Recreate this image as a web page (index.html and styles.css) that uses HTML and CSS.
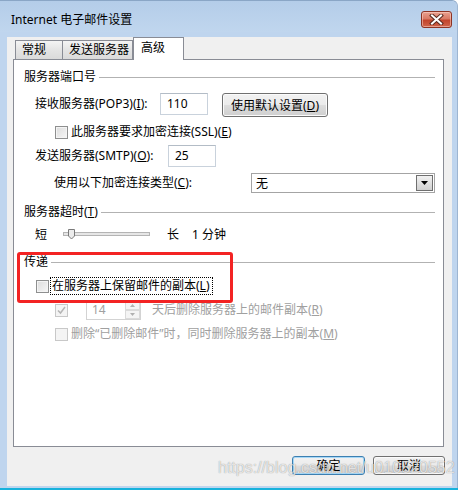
FILE: index.html
```html
<!DOCTYPE html>
<html lang="zh-CN">
<head>
  <meta charset="UTF-8">
  <title>Internet 电子邮件设置</title>
  <link rel="stylesheet" href="styles.css">
</head>
<body>

  <div class="window">
    <!-- Title bar -->
    <div class="titlebar">
      <span class="title">Internet 电子邮件设置</span>
      <button class="close-btn">
        <svg width="15" height="11" viewBox="0 0 15 11">
          <path d="M3 1.5 L12 9.5 M12 1.5 L3 9.5" stroke="#5a2a1f" stroke-width="4" stroke-linecap="square"/>
          <path d="M3 1.5 L12 9.5 M12 1.5 L3 9.5" stroke="#fff" stroke-width="2" stroke-linecap="square"/>
        </svg>
      </button>
    </div>

    <div class="client">
      <div class="tabs">
        <div class="tab tab-general">常规</div>
        <div class="tab tab-send">发送服务器</div>
        <div class="tab active">高级</div>
      </div>

      <div class="panel">
        <div class="group-title"><span>服务器端口号</span><i class="rule"></i></div>

        <div class="row row-pop">
          <span class="lbl lbl-pop">接收服务器(POP3)(<u>I</u>):</span>
          <div class="textbox">110</div>
          <button class="btn btn-default-set">使用默认设置(<u>D</u>)</button>
        </div>

        <div class="row row-ssl">
          <span class="check"></span>
          <span class="check-text">此服务器要求加密连接(SSL)(<u>E</u>)</span>
        </div>

        <div class="row row-smtp">
          <span class="lbl lbl-smtp">发送服务器(SMTP)(<u>O</u>):</span>
          <div class="textbox">25</div>
        </div>

        <div class="row row-enc">
          <span class="lbl lbl-enc">使用以下加密连接类型(<u>C</u>):</span>
          <div class="select">
            <span class="select-value">无</span>
            <span class="select-btn">
              <svg width="7" height="4" viewBox="0 0 7 4"><path d="M0 0 H7 L3.5 4 Z" fill="#000"/></svg>
            </span>
          </div>
        </div>

        <div class="group-title gt-timeout"><span>服务器超时(<u>T</u>)</span><i class="rule"></i></div>

        <div class="row row-slider">
          <span class="short">短</span>
          <svg class="slider" width="87" height="16" viewBox="0 0 87 16">
            <rect x="0.5" y="5.5" width="86" height="3" fill="#e6e6e6" stroke="#b4b4b4"/>
            <path d="M5.5 2.5 H11.5 V9 L8.5 12 L5.5 9 Z" fill="#ececec" stroke="#7a7a7a"/>
          </svg>
          <span class="long">长</span>
          <span class="minutes">1 分钟</span>
        </div>

        <div class="group-title gt-deliver"><span>传递</span><i class="rule"></i></div>

        <div class="row row-keep">
          <span class="check"></span>
          <span class="focus-text">在服务器上保留邮件的副本(<u>L</u>)</span>
        </div>

        <div class="row row-days">
          <span class="check disabled checked">
            <svg width="9" height="9" viewBox="0 0 9 9"><path d="M1 4.5 L3.5 7 L8 1" fill="none" stroke="#b5b5b5" stroke-width="1.5"/></svg>
          </span>
          <div class="spinner">
            <span class="spin-value">14</span>
            <span class="spin-btns">
              <span class="spin-up"><svg width="5" height="3" viewBox="0 0 5 3"><path d="M0 3 H5 L2.5 0 Z" fill="#b0b0b0"/></svg></span>
              <span class="spin-down"><svg width="5" height="3" viewBox="0 0 5 3"><path d="M0 0 H5 L2.5 3 Z" fill="#b0b0b0"/></svg></span>
            </span>
          </div>
          <span class="muted days-text">天后删除服务器上的邮件副本(<u>R</u>)</span>
        </div>

        <div class="row row-delete">
          <span class="check disabled"></span>
          <span class="check-text muted">删除“已删除邮件”时，同时删除服务器上的副本(<u>M</u>)</span>
        </div>
      </div>

      <div class="footer">
        <button class="btn dlg-btn ok">确定</button>
        <button class="btn dlg-btn cancel">取消</button>
      </div>
    </div>
  </div>
  <div class="edge"></div>

  <!-- annotation and watermark on top of the screenshot -->
  <div class="annot"></div>
  <div class="watermark">https://blog.csdn.net/u010520552</div>

</body>
</html>
```

FILE: styles.css
```css
* {
  box-sizing: border-box;
}

body {
  margin: 0;
  width: 463px;
  height: 490px;
  overflow: hidden;
  position: relative;
  background-color: #ffffff;
  font-family: 'Noto Sans', 'Noto Sans CJK SC', sans-serif;
  font-size: 12px;
  line-height: 16px;
  color: #000;
}

u {
  text-decoration: underline;
  text-underline-offset: 1px;
}

.window {
  width: 458px;
  height: 488px;
  background-color: #bfd5ee;
  border-top: 1px solid #8aa6c6;
  border-right: 1px solid #9db5d1;
  border-radius: 0 6px 0 0;
}

.edge {
  width: 458px;
  height: 2px;
  background-color: #17b2dc;
}

.titlebar {
  height: 31px;
  display: flex;
  justify-content: space-between;
  align-items: flex-start;
  background: linear-gradient(#b4cde9, #c0d6ee);
  border-radius: 0 6px 0 0;
}

.title {
  margin-left: 11px;
  margin-top: 11px;
  line-height: 16px;
}

.close-btn {
  margin-top: 10px;
  margin-right: 5px;
  width: 31px;
  height: 17px;
  padding: 0;
  border: 1px solid #8d3323;
  border-radius: 3px;
  background: linear-gradient(#e9a08f 0%, #d97a65 45%, #c2442b 55%, #d0644a 100%);
  box-shadow: inset 0 0 0 1px rgba(255, 220, 210, 0.5);
  display: flex;
  align-items: center;
  justify-content: center;
}

.client {
  margin: 0 5px 0 7px;
  height: 449px;
  background-color: #f0f0f0;
  padding: 0 8px 0 6px;
}

.tabs {
  display: flex;
  align-items: flex-end;
  height: 23px;
  margin-top: 5px;
  margin-left: 2px;
  margin-bottom: -1px;
  position: relative;
  z-index: 1;
}

.tab {
  height: 20px;
  border: 1px solid #898c95;
  background: linear-gradient(#f4f4f4, #e4e4e4 50%, #dadada);
  padding: 1px 0 0 6px;
  line-height: 16px;
}

.tab-general {
  width: 48px;
}

.tab-send {
  width: 71px;
  margin-left: -1px;
}

.tab.active {
  width: 51px;
  height: 23px;
  background: #fff;
  border-bottom: none;
  padding: 2px 0 0 7px;
}

.panel {
  height: 388px;
  border: 1px solid #898c95;
  background-color: #fff;
  padding: 0 8px 0 10px;
}

.group-title {
  display: flex;
  align-items: center;
  height: 16px;
  margin-top: 9px;
}

.rule {
  flex: 1;
  height: 1px;
  margin-left: 3px;
  background-color: #b2b2b2;
}

.gt-timeout,
.gt-deliver {
  margin-top: 11px;
}

.row {
  display: flex;
  align-items: center;
  white-space: nowrap;
}

.row-pop {
  align-items: flex-start;
  height: 24px;
  margin-top: 8px;
  margin-left: 11px;
}

.lbl {
  line-height: 22px;
}

.lbl-pop {
  width: 125px;
}

.textbox {
  width: 48px;
  height: 22px;
  border: 1px solid #c9d2dc;
  border-top-color: #b3bcc6;
  background: #fff;
  padding-left: 6px;
  line-height: 20px;
}

.btn {
  font-family: inherit;
  font-size: 12px;
  color: #000;
  padding: 0;
  border: 1px solid #707070;
  border-radius: 3px;
  background: linear-gradient(#f2f2f2 0%, #ebebeb 48%, #dddddd 52%, #cfcfcf 100%);
  box-shadow: inset 0 0 0 1px #fbfbfb;
}

.btn-default-set {
  margin-left: 14px;
  width: 106px;
  height: 24px;
}

.check {
  width: 13px;
  height: 13px;
  flex: none;
  border: 1px solid #8e8f8f;
  background: linear-gradient(135deg, #dcdcdc, #f6f6f6);
  box-shadow: inset 0 0 0 1px #f4f4f4;
  display: flex;
  align-items: center;
  justify-content: center;
}

.check.disabled {
  border-color: #c8c8c8;
  background: #f4f4f4;
  box-shadow: none;
}

.check-text {
  margin-left: 3px;
}

.row-ssl {
  height: 14px;
  margin-top: 8px;
  margin-left: 31px;
}

.row-smtp {
  height: 22px;
  margin-top: 6px;
  margin-left: 11px;
}

.lbl-smtp {
  width: 133px;
}

.row-enc {
  height: 20px;
  margin-top: 6px;
  margin-left: 30px;
}

.lbl-enc {
  width: 198px;
}

.select {
  width: 185px;
  height: 20px;
  border: 1px solid #a4a4a4;
  padding: 1px;
  display: flex;
  justify-content: space-between;
  align-items: stretch;
}

.select-value {
  padding-left: 3px;
  line-height: 17px;
}

.select-btn {
  width: 17px;
  border: 1px solid #6f6f6f;
  background: linear-gradient(#f2f2f2, #e0e0e0 50%, #d0d0d0);
  display: flex;
  align-items: center;
  justify-content: center;
}

.row-slider {
  height: 16px;
  margin-top: 7px;
  margin-left: 11px;
}

.slider {
  margin-left: 16px;
}

.long {
  margin-left: 17px;
}

.minutes {
  margin-left: 13px;
}

.row-keep {
  height: 18px;
  margin-top: 7px;
  margin-left: 12px;
}

.focus-text {
  margin-left: 1px;
  height: 18px;
  border: 1px dotted #000;
  padding: 0 2px 0 1px;
  line-height: 16px;
}

.row-days {
  height: 20px;
  margin-top: 5px;
  margin-left: 31px;
}

.spinner {
  margin-left: 18px;
  width: 55px;
  height: 20px;
  border: 1px solid #d3d3d3;
  display: flex;
  justify-content: space-between;
}

.spin-value {
  padding-left: 5px;
  line-height: 18px;
  color: #a0a0a0;
}

.spin-btns {
  width: 15px;
  display: flex;
  flex-direction: column;
}

.spin-btns span {
  flex: 1;
  border: 1px solid #dadada;
  background: #f4f4f4;
  display: flex;
  align-items: center;
  justify-content: center;
}

.muted {
  color: #a0a0a0;
}

.days-text {
  margin-left: 11px;
}

.row-delete {
  height: 16px;
  margin-top: 6px;
  margin-left: 31px;
}

.footer {
  display: flex;
  justify-content: flex-end;
  gap: 8px;
  margin-top: 9px;
  margin-right: -1px;
}

.dlg-btn {
  height: 19px;
  line-height: 16px;
}

.ok {
  width: 73px;
  border-color: #3c7fb1;
  box-shadow: inset 0 0 0 1px #a6d8f7;
}

.cancel {
  width: 72px;
}

.annot {
  position: absolute;
  left: 17px;
  top: 252px;
  width: 216px;
  height: 51px;
  border: 3px solid #f32323;
  border-radius: 3px;
}

.watermark {
  position: absolute;
  left: 218px;
  top: 459px;
  font-family: 'Liberation Sans', Arial, sans-serif;
  font-size: 16px;
  line-height: 18px;
  color: rgba(255, 255, 255, 0.75);
  text-shadow: 0 0 1px rgba(0, 0, 0, 0.45);
}
```
